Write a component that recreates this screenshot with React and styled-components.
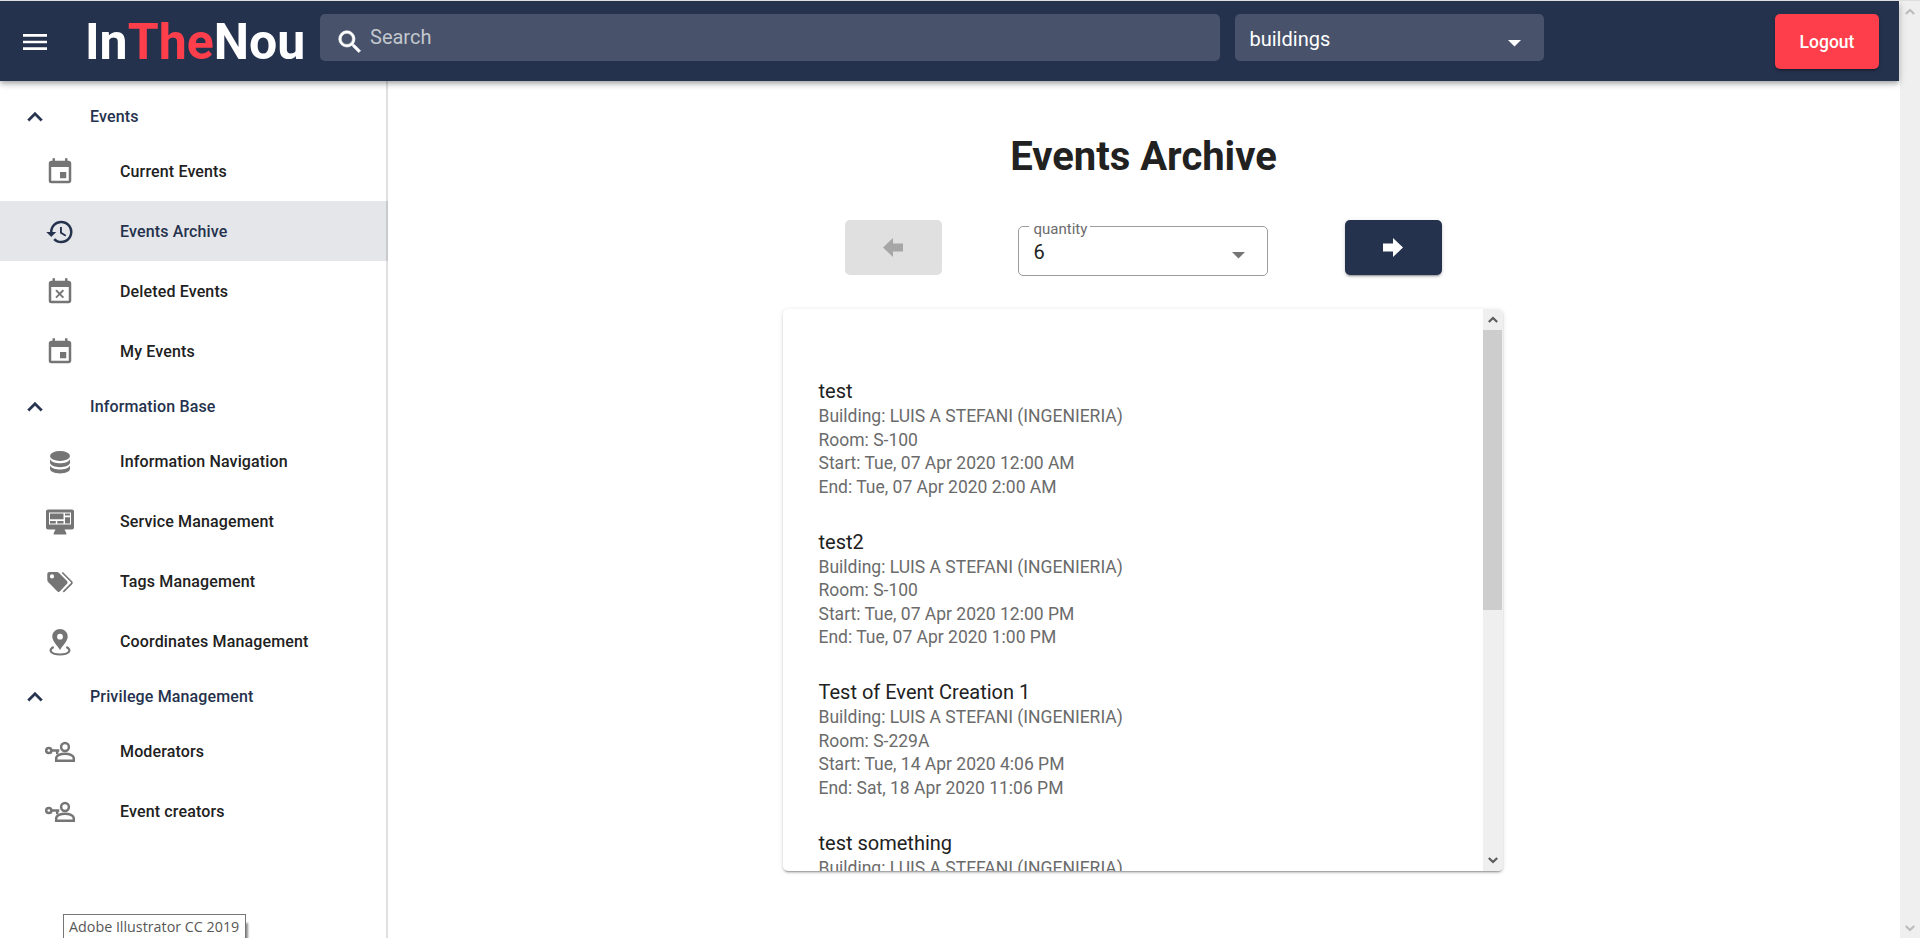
import React from 'react';
import styled, { createGlobalStyle, css } from 'styled-components';
import { MdMenu, MdSearch, MdExpandLess, MdEvent, MdHistory, MdEventBusy } from 'react-icons/md';

const navy = '#25324e';
const red = '#ff3e4c';

const GlobalStyle = createGlobalStyle`
  * { box-sizing: border-box; }
  body {
    margin: 0;
    background: #fff;
    color: #212121;
    font-family: Roboto, "Liberation Sans", sans-serif;
    font-size: 20px;
    overflow: hidden;
  }
  button { font-family: inherit; border: 0; padding: 0; }
  h1, h2, p, ul { margin: 0; padding: 0; }
  ul { list-style: none; }
  svg { display: block; flex: none; }
`;

const Screen = styled.div`
  display: flex;
  width: 1920px;
  height: 938px;
  border-top: 1px solid #dde0dd;
  overflow: hidden;
`;

const Page = styled.div`
  flex: 1;
  min-width: 0;
  display: flex;
  flex-direction: column;
`;

const Header = styled.header`
  position: relative;
  z-index: 2;
  flex: none;
  display: flex;
  align-items: flex-start;
  height: 80px;
  padding: 13px 20px 0 19px;
  background: ${navy};
  color: #fff;
  box-shadow: 0 2px 4px -1px rgba(0, 0, 0, 0.2), 0 4px 5px rgba(0, 0, 0, 0.14),
    0 1px 10px rgba(0, 0, 0, 0.12);
`;

const MenuButton = styled.button`
  margin: 12px 34px 0 0;
  background: none;
  color: inherit;
  font-size: 32px;
`;

const Logo = styled.div`
  width: 235px;
  margin-top: -2px;
  font-size: 50px;
  font-weight: 700;
  line-height: 60px;
  span { color: ${red}; }
`;

const Field = styled.div`
  display: flex;
  width: ${(p) => p.$width}px;
  height: 47px;
  margin-right: 15px;
  border-radius: 5px;
  background: rgba(255, 255, 255, 0.16);
  line-height: 24px;
`;

const SearchField = styled(Field)`
  padding: 11px 15px;
  gap: 5px;
  color: #c3c7ce;
  svg {
    margin-top: 2px;
    color: #fff;
    font-size: 30px;
  }
  path:not([fill='none']) {
    stroke: currentColor;
    stroke-width: 0.5px;
  }
`;

const SelectField = styled(Field)`
  justify-content: space-between;
  padding: 13px 23px 0 14.5px;
  svg { margin-top: 13px; }
`;

const LogoutButton = styled.button`
  width: 104px;
  height: 55px;
  margin-left: auto;
  border-radius: 5px;
  background: ${red};
  color: #fff;
  font-size: 17.5px;
  font-weight: 500;
  box-shadow: 0 3px 1px -2px rgba(0, 0, 0, 0.2), 0 2px 2px rgba(0, 0, 0, 0.14),
    0 1px 5px rgba(0, 0, 0, 0.12);
`;

const Body = styled.div`
  flex: 1;
  display: flex;
  min-height: 0;
`;

const Drawer = styled.nav`
  position: relative;
  flex: none;
  width: 388px;
  padding-top: 10px;
  font-size: 16px;
  font-weight: 500;
  letter-spacing: 0.14px;
  &::after {
    content: '';
    position: absolute;
    top: 0;
    right: 0;
    bottom: 0;
    width: 2px;
    background: rgba(0, 0, 0, 0.12);
  }
`;

const GroupHeading = styled.div`
  display: flex;
  align-items: center;
  gap: 40px;
  height: 50px;
  padding-left: 20px;
  color: ${navy};
  svg {
    margin-top: 1px;
    font-size: 30px;
  }
  path:not([fill='none']) {
    stroke: currentColor;
    stroke-width: 0.3px;
  }
`;

const NavItem = styled.li`
  display: flex;
  align-items: center;
  gap: 45px;
  height: 60px;
  padding-left: 45px;
  svg { width: 30px; height: 30px; margin-top: 1px; color: #757575; }
  ${(p) =>
    p.$active &&
    css`
      background: #e4e6e9;
      color: ${navy};
      svg { color: ${navy}; }
    `}
`;

const Main = styled.main`
  flex: 1;
  display: flex;
  flex-direction: column;
  align-items: center;
`;

const Title = styled.h1`
  margin-top: 52px;
  font-size: 40px;
  font-weight: 700;
  line-height: 47px;
`;

const Pager = styled.div`
  display: flex;
  align-items: flex-start;
  justify-content: space-between;
  width: 597px;
  height: 56px;
  margin-top: 40px;
`;

const PageButton = styled.button`
  display: flex;
  align-items: center;
  justify-content: center;
  width: 97px;
  height: 55px;
  padding-right: 1px;
  border-radius: 5px;
  background: ${(p) => (p.disabled ? '#e0e0e0' : navy)};
  color: ${(p) => (p.disabled ? '#a6a6a6' : '#fff')};
  box-shadow: ${(p) =>
    p.disabled
      ? 'none'
      : '0 3px 1px -2px rgba(0,0,0,.2), 0 2px 2px rgba(0,0,0,.14), 0 1px 5px rgba(0,0,0,.12)'};
`;

const Quantity = styled.fieldset`
  display: flex;
  justify-content: space-between;
  width: 250px;
  height: 59px;
  margin: -3px 2px 0 0;
  padding: 5px 22px 0 15px;
  border: 1px solid #9c9c9c;
  border-radius: 5px;
  line-height: 24px;
  legend {
    height: 18px;
    margin-left: -5px;
    padding: 0 3px 0 5px;
    color: #6b6b6b;
    font-size: 15px;
    line-height: 24px;
  }
  svg { color: #757575; margin-top: 12px; }
`;

const Card = styled.section`
  display: flex;
  width: 720px;
  height: 562px;
  margin: 33px 1px 0 0;
  border-radius: 5px;
  overflow: hidden;
  box-shadow: 0 3px 1px -2px rgba(0, 0, 0, 0.2), 0 2px 2px rgba(0, 0, 0, 0.14),
    0 1px 5px rgba(0, 0, 0, 0.12);
`;

const EventList = styled.div`
  flex: 1;
  padding: 68px 36px 0 35.5px;
  overflow: hidden;
`;

const EventEntry = styled.article`
  height: 150.5px;
  h2 { font-size: 20px; font-weight: 400; line-height: 28.2px; }
  p {
    color: #6b6b6b;
    font-size: 17.5px;
    line-height: 23.6px;
  }
`;

const ScrollTrack = styled.div`
  flex: none;
  display: flex;
  flex-direction: column;
  align-items: center;
  width: 20px;
  padding: ${(p) => (p.$page ? '7px 0 6px' : '7px 1px 7px 0')};
  background: #efefef;
  color: ${(p) => (p.$page ? '#bdbdbd' : '#5c5c5c')};
  ${(p) => p.$page && css`width: 21px; border-left: 1px solid #fff;`}
  svg:last-child { margin-top: auto; }
`;

const ScrollThumb = styled.div`
  flex: none;
  width: 19px;
  height: 280px;
  margin-top: 7px;
  background: #cdcdcd;
`;

const Tooltip = styled.div`
  position: absolute;
  z-index: 3;
  left: 63px;
  top: 914px;
  width: 183px;
  height: 30px;
  padding-left: 5px;
  border: 1px solid #767676;
  background: #fff;
  box-shadow: 3px 8px 2px -1px rgba(0, 0, 0, 0.45);
  color: #575757;
  font: 14.3px/23px "Open Sans", "Noto Sans", sans-serif;
  white-space: nowrap;
`;

const DatabaseIcon = () => (
  <svg viewBox="0 0 30 30" fill="currentColor">
    <ellipse cx="15" cy="9" rx="10" ry="5" />
    <path d="M5 12.2c1.500 3 6 4 10 4s8.500-1 10-4v3.400c0 2.700-4.500 4.700-10 4.700S5 18.300 5 15.600z" />
    <path d="M5 18.600c1.500 3 6 4 10 4s8.500-1 10-4v3.200c0 2.700-4.500 4.700-10 4.700S5 24.500 5 21.800z" />
  </svg>
);

const MonitorIcon = () => (
  <svg viewBox="0 0 30 30" fill="currentColor">
    <path
      fillRule="evenodd"
      d="M3 2.500h24a2 2 0 0 1 2 2v16a2 2 0 0 1-2 2h-7.500l1.800 3.500v1.500H8.700V26l1.800-3.500H3a2 2 0 0 1-2-2v-16a2 2 0 0 1 2-2zM4 5.500v12h22v-12z"
    />
    <path d="M5 6.500h13.500v5.800H5zM5 14h5.800v2.500H5zM12.300 14h6.200v2.500h-6.200zM20 6.500h5v2h-5zM20 10.300h5v6.200h-5z" />
  </svg>
);

const TagsIcon = () => (
  <svg viewBox="0 0 30 30" fill="currentColor">
    <path
      fillRule="evenodd"
      d="M4.300 5h7.500c.8 0 1.500.3 2 .8l8.200 8.200c.8.800.8 2 0 2.800l-7 7.500c-.8.800-2 .8-2.800 0L3.100 15.100c-.5-.5-.8-1.200-.8-2V7c0-1.100.9-2 2-2zm2.700 2.300a2.100 2.100 0 1 0 0 4.200 2.100 2.100 0 0 0 0-4.200z"
    />
    <path d="M17.300 5.500l9 9q1.200 1.200 0 2.400l-8 8" fill="none" stroke="currentColor" strokeWidth="1.700" />
  </svg>
);

const PlaceIcon = () => (
  <svg viewBox="0 0 30 30" fill="currentColor">
    <path
      fillRule="evenodd"
      d="M15 2c4.200 0 7.700 3.300 7.700 7.500 0 4.500-4.500 8.300-7.700 13.500C11.800 17.800 7.300 14 7.300 9.500 7.300 5.300 10.800 2 15 2zm0 4.800a2.900 2.900 0 1 0 0 5.800 2.900 2.900 0 0 0 0-5.800z"
    />
    <path d="M8.700 20.100C2.500 23 6 27.500 15 27.500s12.500-4.500 6.300-7.400" fill="none" stroke="currentColor" strokeWidth="2.200" />
  </svg>
);

const UserKeyIcon = () => (
  <svg viewBox="0 0 30 30" fill="none" stroke="currentColor" strokeWidth="2.500">
    <circle cx="20" cy="10" r="3.900" />
    <path d="M11.200 23.800v-2.500c0-2.900 4.700-4.600 8.800-4.600s8.800 1.700 8.800 4.600v2.500z" />
    <circle cx="3.800" cy="13.500" r="2.600" />
    <path d="M6.500 13.500h7.800M12.200 13.500v3.800" />
  </svg>
);

const Caret = () => (
  <svg width="13" height="7" viewBox="0 0 13 7" fill="currentColor">
    <path d="M0 0h13L6.500 6.500z" />
  </svg>
);

const BlockArrow = ({ left }) => (
  <svg width="20" height="19" viewBox="0 0 20 19" fill="currentColor">
    <path d={left ? 'M0 9.500L10 0v5.500h10v8H10V19z' : 'M20 9.500L10 0v5.500H0v8h10V19z'} />
  </svg>
);

const ScrollArrow = ({ down }) => (
  <svg width="10" height="7" viewBox="0 0 10 7" fill="none" stroke="currentColor" strokeWidth="2.200">
    <path d={down ? 'M.8 1l4.200 4 4.200-4' : 'M.8 6L5 2l4.200 4'} />
  </svg>
);

const groups = [
  {
    name: 'Events',
    items: [
      ['Current Events', MdEvent],
      ['Events Archive', MdHistory, true],
      ['Deleted Events', MdEventBusy],
      ['My Events', MdEvent],
    ],
  },
  {
    name: 'Information Base',
    items: [
      ['Information Navigation', DatabaseIcon],
      ['Service Management', MonitorIcon],
      ['Tags Management', TagsIcon],
      ['Coordinates Management', PlaceIcon],
    ],
  },
  {
    name: 'Privilege Management',
    items: [
      ['Moderators', UserKeyIcon],
      ['Event creators', UserKeyIcon],
    ],
  },
];

const building = 'LUIS A STEFANI (INGENIERIA)';
const events = [
  { name: 'test', room: 'S-100', start: 'Tue, 07 Apr 2020 12:00 AM', end: 'Tue, 07 Apr 2020 2:00 AM' },
  { name: 'test2', room: 'S-100', start: 'Tue, 07 Apr 2020 12:00 PM', end: 'Tue, 07 Apr 2020 1:00 PM' },
  { name: 'Test of Event Creation 1', room: 'S-229A', start: 'Tue, 14 Apr 2020 4:06 PM', end: 'Sat, 18 Apr 2020 11:06 PM' },
  { name: 'test something' },
];

export default function App() {
  return (
    <>
      <GlobalStyle />
      <Screen>
        <Page>
          <Header>
            <MenuButton aria-label="Menu"><MdMenu /></MenuButton>
            <Logo>In<span>The</span>Nou</Logo>
            <SearchField $width={900}><MdSearch />Search</SearchField>
            <SelectField $width={309}>buildings<Caret /></SelectField>
            <LogoutButton>Logout</LogoutButton>
          </Header>
          <Body>
            <Drawer>
              {groups.map((group) => (
                <React.Fragment key={group.name}>
                  <GroupHeading><MdExpandLess />{group.name}</GroupHeading>
                  <ul>
                    {group.items.map(([label, Icon, active]) => (
                      <NavItem key={label} $active={active}><Icon />{label}</NavItem>
                    ))}
                  </ul>
                </React.Fragment>
              ))}
            </Drawer>
            <Main>
              <Title>Events Archive</Title>
              <Pager>
                <PageButton disabled aria-label="Previous"><BlockArrow left /></PageButton>
                <Quantity>
                  <legend>quantity</legend>
                  6<Caret />
                </Quantity>
                <PageButton aria-label="Next"><BlockArrow /></PageButton>
              </Pager>
              <Card>
                <EventList>
                  {events.map((e) => (
                    <EventEntry key={e.name}>
                      <h2>{e.name}</h2>
                      <p>Building: {building}</p>
                      {e.room && (
                        <>
                          <p>Room: {e.room}</p>
                          <p>Start: {e.start}</p>
                          <p>End: {e.end}</p>
                        </>
                      )}
                    </EventEntry>
                  ))}
                </EventList>
                <ScrollTrack>
                  <ScrollArrow />
                  <ScrollThumb />
                  <ScrollArrow down />
                </ScrollTrack>
              </Card>
            </Main>
          </Body>
        </Page>
        <ScrollTrack $page>
          <ScrollArrow />
          <ScrollArrow down />
        </ScrollTrack>
      </Screen>
      <Tooltip>Adobe Illustrator CC 2019</Tooltip>
    </>
  );
}
